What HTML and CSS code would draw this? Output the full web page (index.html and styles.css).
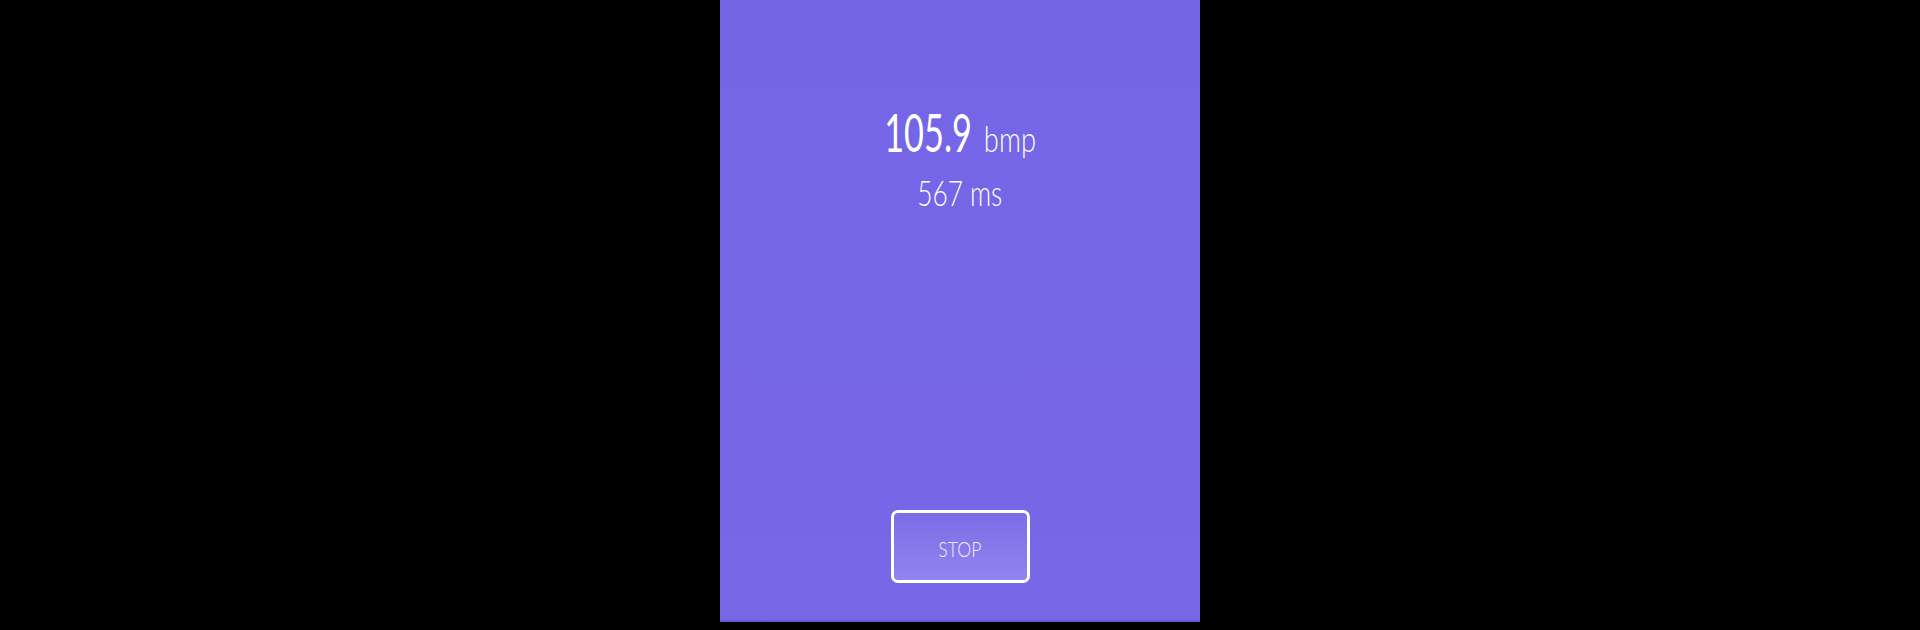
FILE: index.html
```html
<!DOCTYPE html>
<html lang="en">

<head>
    <meta charset="UTF-8">
    <meta name="viewport" content="width=device-width, initial-scale=1.0">
    <title>Metronome</title>
    <link rel="stylesheet" href="styles.css">
</head>

<body>
    <!-- Phone screen in the middle of the window -->
    <div class="screen">
        <!-- Current tempo -->
        <div class="readout">
            <div class="tempo">
                <span class="tempo-value">105.9</span>
                <span class="tempo-unit">bmp</span>
            </div>
            <div class="interval">567 ms</div>
        </div>

        <!-- Start / stop -->
        <button class="stop-btn"><span class="stop-label">STOP</span></button>
    </div>
</body>

</html>
```

FILE: styles.css
```css
/* Black backdrop around the screen */
body {
    margin: 0;
    background-color: #000;
    font-family: Lato, "Noto Sans", sans-serif;
    color: #fff;
}

.screen {
    width: 480px;
    height: 620px;
    margin: 0 auto;
    background: linear-gradient(#7366e6, #7867e7);
    border-bottom: 2px solid #6657cf;
    display: flex;
    flex-direction: column;
    align-items: center;
}

.readout {
    margin-top: 102px;
    display: flex;
    flex-direction: column;
    align-items: center;
}

.tempo {
    display: flex;
    align-items: baseline;
    transform: scaleX(0.66);
}

.tempo-value {
    font-size: 52px;
    line-height: 60px;
}

.tempo-unit {
    display: inline-block;
    font-size: 36px;
    font-weight: 300;
    margin-left: 18px;
    margin-right: 11px;
    transform: scaleX(1.15);
    transform-origin: left;
}

.interval {
    font-size: 35px;
    font-weight: 300;
    line-height: 44px;
    margin-top: 8px;
    transform: scaleX(0.75);
}

/* Outlined button near the bottom */
.stop-btn {
    margin-top: auto;
    margin-bottom: 37px;
    width: 139px;
    height: 73px;
    padding: 4px 0 0;
    border: 3px solid #fff;
    border-radius: 7px;
    background: linear-gradient(#7d6de6, #9383ef);
    color: #f1eefc;
    font-family: Lato, "Noto Sans", sans-serif;
    font-size: 22px;
    font-weight: 300;
    cursor: pointer;
}

.stop-label {
    display: inline-block;
    transform: scaleX(0.8);
}
```
